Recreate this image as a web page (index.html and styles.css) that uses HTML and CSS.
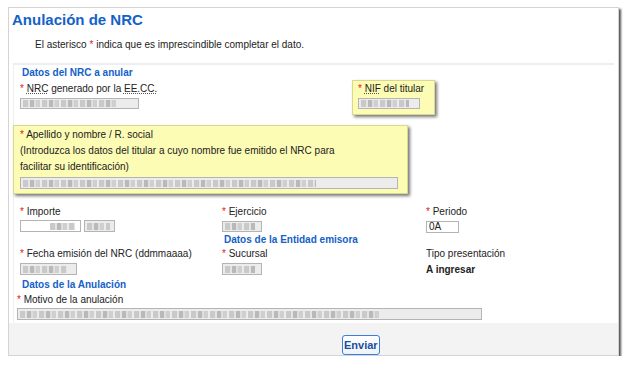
FILE: index.html
```html
<!DOCTYPE html>
<html lang="es">
<head>
    <meta charset="UTF-8">
    <title>Anulación de NRC</title>
    <link rel="stylesheet" href="styles.css">
</head>
<body>
    <div class="window">
        <h1 class="title">Anulación de NRC</h1>
        <p class="note">El asterisco <span class="req">*</span> indica que es imprescindible completar el dato.</p>

        <form class="form-box">
            <h2 class="legend">Datos del NRC a anular</h2>
            <div class="nrc-row">
                <div class="field nrc-field">
                    <label><span class="req">*</span> <u>NRC</u> generado por la <u>EE.CC.</u></label>
                    <span class="box gray w119"><span class="blur"></span></span>
                </div>
                <div class="field note-box nif-box">
                    <label><span class="req">*</span> <u>NIF</u> del titular</label>
                    <span class="box gray w62"><span class="blur"></span></span>
                </div>
            </div>

            <div class="note-box name-box">
                <label><span class="req">*</span> Apellido y nombre / R. social</label>
                <p>(Introduzca los datos del titular a cuyo nombre fue emitido el NRC para<br>facilitar su identificación)</p>
                <span class="box gray w378"><span class="blur long"></span></span>
            </div>

            <div class="grid">
                <div class="field">
                    <label><span class="req">*</span> Importe</label>
                    <div class="pair">
                        <span class="box tall w61 right"><span class="blur short"></span></span>
                        <span class="box tall gray w31"><span class="blur"></span></span>
                    </div>
                </div>
                <div class="field">
                    <label><span class="req">*</span> Ejercicio</label>
                    <span class="box gray w40"><span class="blur"></span></span>
                    <h2 class="legend inline">Datos de la Entidad emisora</h2>
                </div>
                <div class="field">
                    <label><span class="req">*</span> Periodo</label>
                    <span class="box tall w31 text">0A</span>
                </div>

                <div class="field">
                    <label><span class="req">*</span> Fecha emisión del NRC (ddmmaaaa)</label>
                    <span class="box tall gray w57 low"><span class="blur"></span></span>
                </div>
                <div class="field">
                    <label><span class="req">*</span> Sucursal</label>
                    <span class="box tall gray w40 low"><span class="blur"></span></span>
                </div>
                <div class="field">
                    <label>Tipo presentación</label>
                    <strong class="value">A ingresar</strong>
                </div>
            </div>

            <h2 class="legend anul">Datos de la Anulación</h2>
            <div class="field motivo">
                <label><span class="req">*</span> Motivo de la anulación</label>
                <span class="box tall gray w465"><span class="blur long"></span></span>
            </div>
        </form>

        <div class="footer">
            <button type="button" class="send">Enviar</button>
        </div>
    </div>
</body>
</html>
```

FILE: styles.css
```css
body {
    margin: 0;
    font-family: "Liberation Sans", Arial, sans-serif;
    font-size: 10px;
    color: #222;
    background: #fff;
}
.window {
    margin: 7px 0 0 8px;
    width: 609px;
    height: 347px;
    border: 1px solid #d4d4d4;
    box-shadow: 2px 2px 2px #555;
    display: flex;
    flex-direction: column;
}
.title {
    margin: 4px 0 0 3px;
    font-size: 15px;
    line-height: 16px;
    color: #1461c8;
}
.note {
    margin: 10px 0 0 26px;
    line-height: 14px;
}
.req {
    color: #e21a1a;
}
u {
    text-decoration: underline dotted #555;
}
.form-box {
    margin: 11px 4px 0 4px;
    border-top: 2px solid #eee;
    border-left: 1px solid #eee;
    padding: 2px 0 3px 6px;
    flex: 1;
}
.legend {
    margin: 0;
    font-size: 10px;
    line-height: 12px;
    color: #1461c8;
    padding-left: 2px;
}
.field label {
    display: block;
    line-height: 12px;
}
.box {
    display: flex;
    align-items: center;
    height: 9px;
    border: 1px solid #b4b4b4;
    background: #fff;
    margin-top: 3px;
}
.box.tall {
    height: 10px;
    margin-top: 2px;
}
.box.low {
    margin-top: 3px;
}
.box.gray {
    background: #ececec;
}
.box.right {
    justify-content: flex-end;
}
.box.text {
    padding-left: 2px;
    line-height: 10px;
    margin-top: 3px;
}
.blur {
    display: block;
    height: 7px;
    width: 80%;
    margin: 0 2px;
    background: repeating-linear-gradient(90deg, #c9c9c9 0 5px, #e4e4e4 5px 7px, #b9b9b9 7px 11px, #dedede 11px 13px, #cfcfcf 13px 17px, #ececec 17px 19px);
}
.blur.short {
    width: 25px;
    margin-right: 5px;
}
.blur.long {
    width: 78%;
}
.w119 { width: 117px; }
.w62 { width: 60px; }
.w61 { width: 59px; }
.w31 { width: 29px; }
.w40 { width: 38px; }
.w57 { width: 55px; }
.w378 { width: 376px; }
.w465 { width: 463px; }

.nrc-row {
    display: flex;
    align-items: flex-start;
}
.nrc-field {
    width: 332px;
    padding-top: 4px;
}
.note-box {
    background: #fcfcb4;
    border: 1px solid #d9d98c;
    box-shadow: 2px 2px 3px #777;
}
.nif-box {
    margin-top: 1px;
    padding: 2px 10px 5px 5px;
}
.name-box {
    margin: 10px 0 0 -7px;
    width: 378px;
    padding: 1px 9px 4px 6px;
}
.name-box label {
    display: block;
    line-height: 16px;
}
.name-box p {
    margin: 0;
    line-height: 15.5px;
}
.name-box .box {
    margin-top: 3px;
    height: 10px;
}
.grid {
    display: grid;
    grid-template-columns: 202px 204px 1fr;
    row-gap: 2px;
    margin-top: 12px;
}
.pair {
    display: flex;
    gap: 3px;
}
.legend.inline {
    margin-top: 2px;
}
.value {
    display: block;
    margin-top: 4px;
    line-height: 12px;
}
.legend.anul {
    margin-top: 3px;
}
.motivo {
    margin: 3px 0 0 -3px;
}
.footer {
    background: #f3f3f3;
    flex: 1;
    display: flex;
    align-items: flex-start;
    padding: 12px 0 0 333px;
}
.send {
    font-family: "Liberation Sans", Arial, sans-serif;
    font-size: 11px;
    font-weight: bold;
    line-height: 14px;
    color: #1b4f9a;
    background: linear-gradient(#fff, #eef3fb);
    border: 1px solid #3b7fd8;
    border-radius: 3px;
    padding: 2px 1px;
    cursor: pointer;
}
```
